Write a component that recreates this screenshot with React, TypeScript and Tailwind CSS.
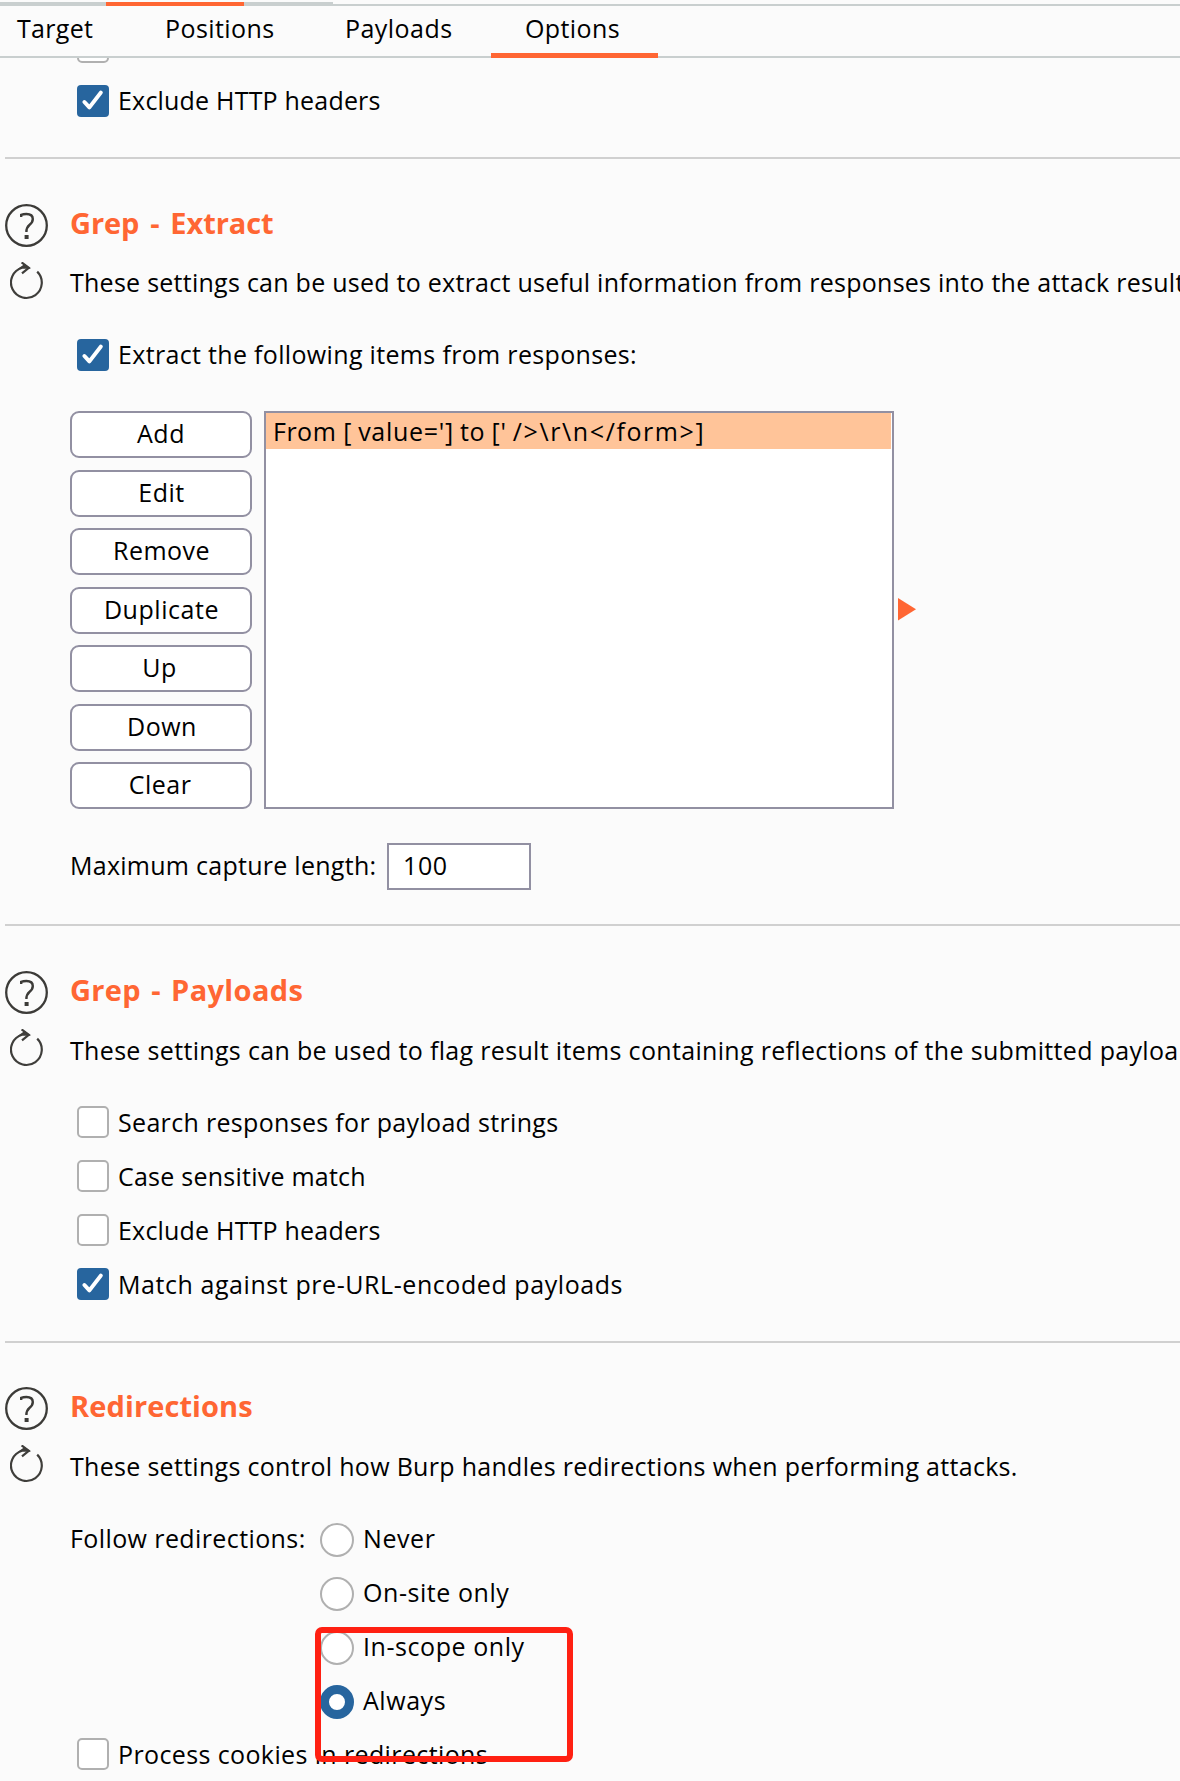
import type { ReactNode } from 'react';

function HelpIcon() {
  return (
    <svg width="43" height="43" viewBox="0 0 43 43" fill="none" stroke="#3c3b38" className="shrink-0">
      <circle cx="21.5" cy="21.5" r="20.3" strokeWidth="2.3" />
      <path d="M16.2 13V10.9C17.6 10.3 19.4 10 21.4 10C25.6 10 27.8 11.8 27.8 15C27.8 17.8 26.4 19.4 24.4 21C22.2 22.8 21.4 24 21.4 28" strokeWidth="2.4" />
      <rect x="19.6" y="31" width="4" height="4" fill="#3c3b38" stroke="none" />
    </svg>
  );
}

function ResetIcon() {
  return (
    <svg width="34" height="38" viewBox="0 0 34 38" fill="none" stroke="#3f3e3b" className="shrink-0">
      <path d="M27.2 9.6A15.4 15.4 0 1 1 12 5.8" strokeWidth="2.2" />
      <path d="M11.6 0.4L18.8 5.8L12 11.4" strokeWidth="2.2" />
      <path d="M11 5.8H18L14.6 3.2Z" fill="#3f3e3b" strokeWidth="2" />
    </svg>
  );
}

function Checkbox({ checked = false }: { checked?: boolean }) {
  if (!checked) return <span className="size-8 shrink-0 rounded-[5px] border-2 border-[#b0b0b0] bg-white" />;
  return (
    <span className="size-8 shrink-0 rounded-[4px] bg-[#27659e]">
      <svg width="32" height="32" viewBox="0 0 32 32" fill="none" stroke="#fff" strokeWidth="4" strokeLinecap="round" strokeLinejoin="round">
        <path d="M7.4 17L12.4 22.4L23.8 7.6" />
      </svg>
    </span>
  );
}

function CheckRow({ checked, className = 'leading-8', children }: { checked?: boolean; className?: string; children: ReactNode }) {
  return (
    <label className={`flex h-8 items-start gap-[9px] pl-[7px] ${className}`}>
      <Checkbox checked={checked} />
      <span>{children}</span>
    </label>
  );
}

function RadioRow({ checked = false, children }: { checked?: boolean; children: ReactNode }) {
  return (
    <label className="flex h-[34px] items-start gap-[9px] leading-[31px]">
      <span
        className={
          checked
            ? 'size-[34px] shrink-0 rounded-full border-[9px] border-[#27659e] bg-white'
            : 'size-[34px] shrink-0 rounded-full border-2 border-[#b0b0b0] bg-white'
        }
      />
      <span>{children}</span>
    </label>
  );
}

function Section({ title, titleClass, className, children }: { title: string; titleClass: string; className: string; children: ReactNode }) {
  return (
    <section className={`flex ${className}`}>
      <div className="flex w-[70px] shrink-0 flex-col pl-[5px] pt-px">
        <HelpIcon />
        <div className="mt-[15px] pl-[5px]">
          <ResetIcon />
        </div>
      </div>
      <div className="min-w-0 flex-1">
        <h2 className={`h-10 text-[29px] font-bold leading-10 text-[#ff6633] ${titleClass}`}>{title}</h2>
        {children}
      </div>
    </section>
  );
}

const Divider = () => <div className="ml-[5px] h-0.5 shrink-0 bg-[#d0d0d0]" />;

const buttons: [string, string][] = [
  ['Add', 'tracking-[0.6px]'],
  ['Edit', 'tracking-[0.5px] pl-px'],
  ['Remove', 'tracking-[0.48px] pl-px'],
  ['Duplicate', 'tracking-[0.56px] pl-px'],
  ['Up', 'tracking-[0.5px] pr-[3px]'],
  ['Down', 'tracking-[0.5px] pl-[2px]'],
  ['Clear', 'tracking-[0.5px] pr-[2px]'],
];

export default function App() {
  return (
    <div className="relative flex h-[1781px] w-[1180px] flex-col overflow-hidden bg-[#fbfbfb] font-['Open_Sans','Noto_Sans',sans-serif] text-[25px] text-black">
      <div className="flex h-1.5 shrink-0 items-end pt-0.5">
        <div className="h-1 w-[106px] bg-[#c9cfcf]" />
        <div className="h-1 w-[138px] bg-[#ff6633]" />
        <div className="h-1 w-[89px] bg-[#c9cfcf]" />
        <div className="h-0.5 flex-1 bg-[#c9cfcf]" />
      </div>
      <nav className="flex h-[52px] shrink-0 border-b-2 border-[#c9cfcf] leading-[45px]">
        <div className="w-[165px] pl-[17px] tracking-[0.3px]">Target</div>
        <div className="w-[180px] tracking-[0.42px]">Positions</div>
        <div className="w-[146px] tracking-[0.45px]">Payloads</div>
        <div className="-mb-0.5 w-[167px] border-b-[5px] border-[#ff6633] pl-[34px] tracking-[0.4px]">Options</div>
      </nav>
      <div className="flex h-[5px] shrink-0 items-end overflow-hidden pl-[77px]">
        <Checkbox />
      </div>
      <CheckRow checked className="ml-[70px] mt-[22px] mb-10 shrink-0 leading-[30px] tracking-[0.2px]">
        Exclude HTTP headers
      </CheckRow>
      <Divider />

      <Section title="Grep - Extract" titleClass="tracking-[-0.1px] [word-spacing:3.5px]" className="h-[765px] shrink-0 pt-[44px]">
        <p className="mt-[23px] whitespace-nowrap leading-8 tracking-[0.26px]">
          These settings can be used to extract useful information from responses into the attack result
        </p>
        <CheckRow checked className="mt-[41px] leading-[30px] tracking-[0.33px]">
          Extract the following items from responses:
        </CheckRow>
        <div className="mt-10 flex h-[398px]">
          <div className="flex w-[182px] flex-col justify-between">
            {buttons.map(([label, cls]) => (
              <button
                key={label}
                className={`flex h-[47px] items-center justify-center rounded-[9px] border-2 border-[#9290a2] bg-white pb-[3px] leading-8 ${cls}`}
              >
                {label}
              </button>
            ))}
          </div>
          <div className="ml-3 w-[630px] border-2 border-[#9290a2] bg-white">
            <div className="mr-px h-9 whitespace-pre bg-[#ffc499] pl-[7px] leading-9 tracking-[0.5px]">
              <span>{'From ['}</span>
              <span className="tracking-[0.7px] [word-spacing:-1px]">{" value='] to [' "}</span>
              <span className="tracking-[1.6px]">{'/>\\r\\n</form>]'}</span>
            </div>
          </div>
          <svg width="18" height="23" viewBox="0 0 18 23" className="ml-1 mt-[187px]">
            <path d="M0 0L18 11.2L0 22.4Z" fill="#ff6633" />
          </svg>
        </div>
        <div className="mt-[34px] flex h-[47px] items-center">
          <span className="w-[317px] pb-1 leading-8 tracking-[0.27px]">Maximum capture length:</span>
          <div className="flex h-[47px] w-36 items-center border-2 border-[#9290a2] bg-white pb-1 pl-[14px] leading-8 tracking-[0.6px]">100</div>
        </div>
      </Section>
      <Divider />

      <Section title="Grep - Payloads" titleClass="tracking-[0.35px] [word-spacing:2.3px]" className="h-[415px] shrink-0 pt-[44px]">
        <p className="mt-6 whitespace-nowrap leading-8 tracking-[0.33px]">
          These settings can be used to flag result items containing reflections of the submitted payloa
        </p>
        <div className="mt-10 flex flex-col gap-[22px]">
          <CheckRow className="leading-8 tracking-[0.32px]">Search responses for payload strings</CheckRow>
          <CheckRow className="leading-8 tracking-[0.24px]">Case sensitive match</CheckRow>
          <CheckRow className="leading-8 tracking-[0.2px]">Exclude HTTP headers</CheckRow>
          <CheckRow checked className="leading-8 tracking-[0.57px]">
            Match against pre-URL-encoded payloads
          </CheckRow>
        </div>
      </Section>
      <Divider />

      <Section title="Redirections" titleClass="tracking-[0.1px]" className="shrink-0 pt-[43px]">
        <p className="mt-6 whitespace-nowrap leading-8 tracking-[0.3px]">
          These settings control how Burp handles redirections when performing attacks.
        </p>
        <div className="mt-[41px] flex">
          <span className="w-[250px] leading-[31px] tracking-[0.4px]">Follow redirections:</span>
          <div className="flex flex-col gap-5 tracking-[0.56px]">
            <RadioRow>Never</RadioRow>
            <RadioRow>On-site only</RadioRow>
            <RadioRow>In-scope only</RadioRow>
            <RadioRow checked>Always</RadioRow>
          </div>
        </div>
        <CheckRow className="mt-[19px] leading-8 tracking-[0.38px]">Process cookies in redirections</CheckRow>
      </Section>

      <div className="absolute left-[315px] top-[1627px] h-[135px] w-[258px] rounded-[7px] border-[6px] border-[#ff2012]" />
    </div>
  );
}
